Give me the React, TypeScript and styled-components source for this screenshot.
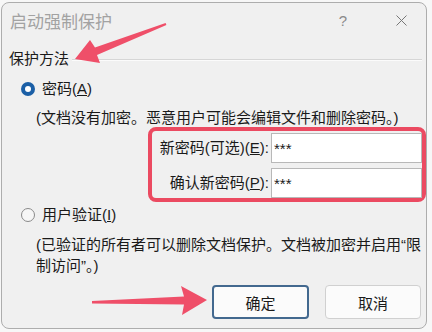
import React from "react";
import styled, { createGlobalStyle } from "styled-components";

const GlobalStyle = createGlobalStyle`
    html, body {
        margin: 0;
        padding: 0;
        width: 432px;
        height: 332px;
        overflow: hidden;
        background: #f7f7f7;
    }
    body {
        font-family: "Liberation Sans", "Noto Sans CJK SC", sans-serif;
    }
`;

// Styled Components
const Stage = styled.div`
    position: relative;
    width: 432px;
    height: 332px;
    box-sizing: border-box;
    padding: 2px 0 0 1px;
`;

const Window = styled.div`
    width: 426px;
    height: 327px;
    box-sizing: border-box;
    border: 1px solid #adadad;
    border-radius: 8px;
    background: #f0f0f0;
    color: #1a1a1a;
    font-size: 15px;
    display: flex;
    flex-direction: column;
`;

const TitleBar = styled.div`
    height: 34px;
    display: flex;
    align-items: center;
    padding: 0 2px 0 8px;
`;

const Title = styled.div`
    flex: 1;
    font-size: 17px;
    color: #a2a2a2;
`;

const TitleButton = styled.div`
    width: 46px;
    height: 30px;
    display: flex;
    align-items: center;
    justify-content: center;
    color: #8a8a8a;
    font-size: 15px;
    & + & {
        margin-left: 12px;
    }
`;

const GroupHeader = styled.div`
    margin-top: 11px;
    height: 22px;
    display: flex;
    align-items: center;
    padding-left: 7px;
    line-height: 22px;
`;

const GroupRule = styled.div`
    flex: 1;
    height: 0;
    margin: 1px 4px 0 3px;
    border-top: 1px solid #d6d6d6;
    border-bottom: 1px solid #fbfbfb;
`;

const GroupBody = styled.div`
    padding-left: 19px;
    display: flex;
    flex-direction: column;
`;

const RadioRow = styled.div<{ $gapTop: number }>`
    margin-top: ${(p) => p.$gapTop}px;
    height: 22px;
    line-height: 22px;
    display: flex;
    align-items: center;
    gap: 7px;
`;

const RadioDot = styled.span<{ $checked: boolean }>`
    width: 14px;
    height: 14px;
    box-sizing: border-box;
    border-radius: 50%;
    display: flex;
    align-items: center;
    justify-content: center;
    background: ${(p) => (p.$checked ? "#1b5fa6" : "#f6f6f6")};
    border: ${(p) => (p.$checked ? "none" : "1px solid #8a8a8a")};
    &::after {
        content: "";
        display: ${(p) => (p.$checked ? "block" : "none")};
        width: 6px;
        height: 6px;
        border-radius: 50%;
        background: #fff;
    }
`;

const Desc = styled.div<{ $lineHeight: number }>`
    margin: 8px 0 0 15px;
    line-height: ${(p) => p.$lineHeight}px;
    white-space: nowrap;
`;

const FieldsBox = styled.div`
    margin-left: 127px;
    width: 278px;
    box-sizing: border-box;
    border: 4px solid #eb4a61;
    border-radius: 8px;
    padding-top: 2px;
    display: grid;
    grid-template-columns: 117px 151px;
    column-gap: 2px;
    row-gap: 5px;
`;

const FieldLabel = styled.label`
    align-self: center;
    text-align: right;
    white-space: nowrap;
    line-height: 20px;
`;

const TextField = styled.input`
    height: 30px;
    width: 151px;
    box-sizing: border-box;
    margin: 0;
    border: 1px solid #b8b8b8;
    background: #fff;
    padding: 0 2px;
    font-family: "Liberation Sans", "Noto Sans CJK SC", sans-serif;
    font-size: 15px;
    color: #1a1a1a;
    outline: none;
`;

const ButtonRow = styled.div`
    margin-top: 9px;
    display: flex;
    justify-content: flex-end;
    gap: 16px;
    padding-right: 5px;
`;

const DialogButton = styled.button<{ $primary?: boolean; $width: number }>`
    width: ${(p) => p.$width}px;
    height: 34px;
    box-sizing: border-box;
    border-radius: 4px;
    background: #fbfbfb;
    border: ${(p) => (p.$primary ? "2px solid #43698f" : "1px solid #d0d0d0")};
    font-family: "Liberation Sans", "Noto Sans CJK SC", sans-serif;
    font-size: 15px;
    color: #1a1a1a;
    padding: 0;
`;

const Overlay = styled.svg`
    position: absolute;
    left: 0;
    top: 0;
    pointer-events: none;
`;

export default function App() {
    return (
        <>
            <GlobalStyle />
            <Stage>
                <Window>
                    <TitleBar>
                        <Title>启动强制保护</Title>
                        <TitleButton>?</TitleButton>
                        <TitleButton>
                            <svg width="11" height="11" viewBox="0 0 11 11">
                                <path d="M0.5 0.5L10.5 10.5M10.5 0.5L0.5 10.5" stroke="#777" strokeWidth="1" />
                            </svg>
                        </TitleButton>
                    </TitleBar>

                    <GroupHeader>
                        <span>保护方法</span>
                        <GroupRule />
                    </GroupHeader>

                    <GroupBody>
                        <RadioRow $gapTop={8}>
                            <RadioDot $checked />
                            <span>
                                密码(<u>A</u>)
                            </span>
                        </RadioRow>
                        <Desc $lineHeight={19}>(文档没有加密。恶意用户可能会编辑文件和删除密码。)</Desc>

                        <FieldsBox>
                            <FieldLabel>
                                新密码(可选)(<u>E</u>):
                            </FieldLabel>
                            <TextField type="text" value="***" readOnly />
                            <FieldLabel>
                                确认新密码(<u>P</u>):
                            </FieldLabel>
                            <TextField type="text" value="***" readOnly />
                        </FieldsBox>

                        <RadioRow $gapTop={2}>
                            <RadioDot $checked={false} />
                            <span>
                                用户验证(<u>I</u>)
                            </span>
                        </RadioRow>
                        <Desc $lineHeight={21}>
                            (已验证的所有者可以删除文档保护。文档被加密并启用“限
                            <br />
                            制访问”。)
                        </Desc>
                    </GroupBody>

                    <ButtonRow>
                        <DialogButton $primary $width={97}>确定</DialogButton>
                        <DialogButton $width={96}>取消</DialogButton>
                    </ButtonRow>
                </Window>

                {/* annotation arrows */}
                <Overlay width="432" height="332" viewBox="0 0 432 332">
                    <polygon
                        points="75,59 90,40 95,47.5 165.6,23 166.4,25 97,55 100,63"
                        fill="#ef4f69"
                    />
                    <polygon
                        points="207,300 181,286 184,296.5 92,301 92,303.5 184,304.5 182,315"
                        fill="#ef4f69"
                    />
                </Overlay>
            </Stage>
        </>
    );
}
